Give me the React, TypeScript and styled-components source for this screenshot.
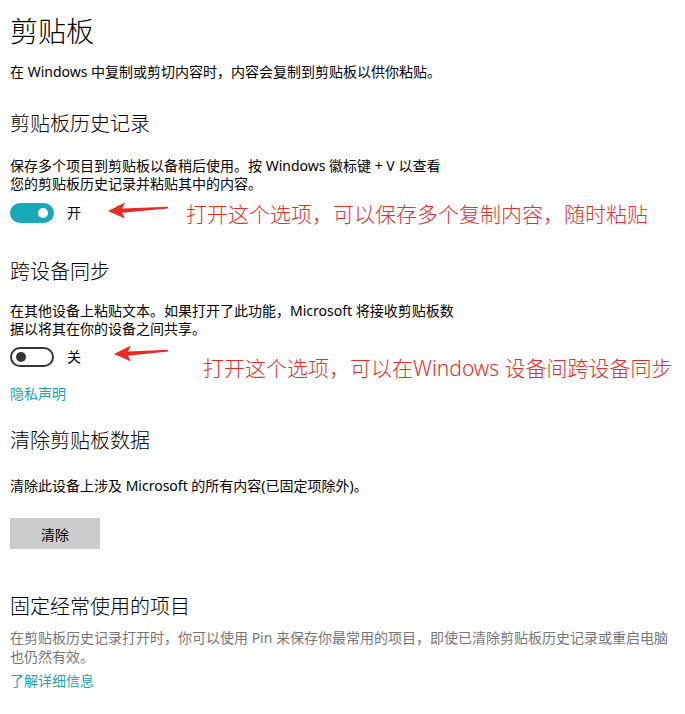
import React from "react";
import styled, { createGlobalStyle } from "styled-components";

const Global = createGlobalStyle`
  html, body { margin: 0; padding: 0; background: #ffffff; }
  body { font-family: "Noto Sans", "Noto Sans CJK SC", sans-serif; color: #000; }
`;

const Page = styled.div`
  width: 685px;
  height: 714px;
  box-sizing: border-box;
  padding: 12px 0 0 10px;
  overflow: hidden;
  display: flex;
  flex-direction: column;
  align-items: flex-start;
`;

const Title = styled.h1`
  margin: 0;
  font-size: 28px;
  line-height: 38px;
  font-weight: 300;
  color: #000;
`;

const Heading = styled.h2<{ $mt: number }>`
  margin: ${(p) => p.$mt}px 0 0;
  font-size: 20px;
  line-height: 28px;
  font-weight: 300;
  color: #000;
`;

const Text = styled.p<{ $mt: number; $lh?: number; $muted?: boolean }>`
  margin: ${(p) => p.$mt}px 0 0;
  font-size: 14px;
  line-height: ${(p) => p.$lh ?? 20}px;
  color: ${(p) => (p.$muted ? "#767676" : "#000")};
  white-space: nowrap;
`;

const Link = styled.a<{ $mt: number }>`
  margin-top: ${(p) => p.$mt}px;
  font-size: 14px;
  line-height: 20px;
  color: #1ca2b3;
  text-decoration: none;
`;

const ToggleRow = styled.div<{ $mt: number }>`
  margin-top: ${(p) => p.$mt}px;
  height: 20px;
  display: flex;
  align-items: center;
  overflow: visible;
`;

const Track = styled.span<{ $on: boolean }>`
  width: 44px;
  height: 20px;
  box-sizing: border-box;
  border-radius: 10px;
  display: flex;
  align-items: center;
  padding: 0 4px;
  justify-content: ${(p) => (p.$on ? "flex-end" : "flex-start")};
  background: ${(p) => (p.$on ? "#16a9b8" : "#fff")};
  border: 2px solid ${(p) => (p.$on ? "#16a9b8" : "#333")};
`;

const Knob = styled.span<{ $on: boolean }>`
  width: 10px;
  height: 10px;
  border-radius: 50%;
  background: ${(p) => (p.$on ? "#fff" : "#333")};
`;

const ToggleLabel = styled.span`
  margin-left: 13px;
  font-size: 14px;
  line-height: 20px;
  color: #000;
`;

const ArrowBox = styled.svg<{ $ml: number; $dy: number }>`
  margin-left: ${(p) => p.$ml}px;
  align-self: flex-start;
  margin-top: ${(p) => p.$dy}px;
  flex: none;
`;

const Note = styled.span<{ $ml: number; $dy: number }>`
  margin-left: ${(p) => p.$ml}px;
  align-self: flex-start;
  margin-top: ${(p) => p.$dy}px;
  font-size: 21px;
  line-height: 26px;
  color: #e2302c;
  white-space: nowrap;
  font-weight: 300;
`;

const Button = styled.button`
  margin-top: 22px;
  width: 90px;
  height: 31px;
  border: none;
  background: #cccccc;
  font-family: inherit;
  font-size: 14px;
  color: #000;
  padding: 0;
`;

const Arrow: React.FC<{ ml: number; dy: number; w: number }> = ({ ml, dy, w }) => (
  <ArrowBox $ml={ml} $dy={dy} width={w} height="18" viewBox={`0 0 ${w} 18`}>
    <path
      d={`M1 10 L18 1.5 L15 7.5 L${w - 1} 5.8 L${w - 1} 7.4 L15 11.8 L18 17.5 Z`}
      fill="#ec2a25"
    />
  </ArrowBox>
);

const Toggle: React.FC<{ on: boolean }> = ({ on }) => (
  <Track $on={on}>
    <Knob $on={on} />
  </Track>
);

export default function App() {
  return (
    <>
      <Global />
      <Page>
        <Title>剪贴板</Title>
        <Text $mt={12}>在 Windows 中复制或剪切内容时，内容会复制到剪贴板以供你粘贴。</Text>

        <Heading $mt={28}>剪贴板历史记录</Heading>
        <Text $mt={19} $lh={18}>
          保存多个项目到剪贴板以备稍后使用。按 Windows 徽标键 + V 以查看
          <br />
          您的剪贴板历史记录并粘贴其中的内容。
        </Text>
        <ToggleRow $mt={10}>
          <Toggle on />
          <ToggleLabel>开</ToggleLabel>
          <Arrow ml={26} dy={-2} w={62} />
          <Note $ml={17} $dy={-2}>打开这个选项，可以保存多个复制内容，随时粘贴</Note>
        </ToggleRow>

        <Heading $mt={35}>跨设备同步</Heading>
        <Text $mt={16} $lh={18}>
          在其他设备上粘贴文本。如果打开了此功能，Microsoft 将接收剪贴板数
          <br />
          据以将其在你的设备之间共享。
        </Text>
        <ToggleRow $mt={9}>
          <Toggle on={false} />
          <ToggleLabel>关</ToggleLabel>
          <Arrow ml={32} dy={-3} w={56} />
          <Note $ml={34} $dy={8}>打开这个选项，可以在Windows 设备间跨设备同步</Note>
        </ToggleRow>
        <Link $mt={17} href="#">隐私声明</Link>

        <Heading $mt={23}>清除剪贴板数据</Heading>
        <Text $mt={21}>清除此设备上涉及 Microsoft 的所有内容(已固定项除外)。</Text>
        <Button>清除</Button>

        <Heading $mt={44}>固定经常使用的项目</Heading>
        <Text $mt={7} $lh={19} $muted>
          在剪贴板历史记录打开时，你可以使用 Pin 来保存你最常用的项目，即使已清除剪贴板历史记录或重启电脑
          <br />
          也仍然有效。
        </Text>
        <Link $mt={5} href="#">了解详细信息</Link>
      </Page>
    </>
  );
}
